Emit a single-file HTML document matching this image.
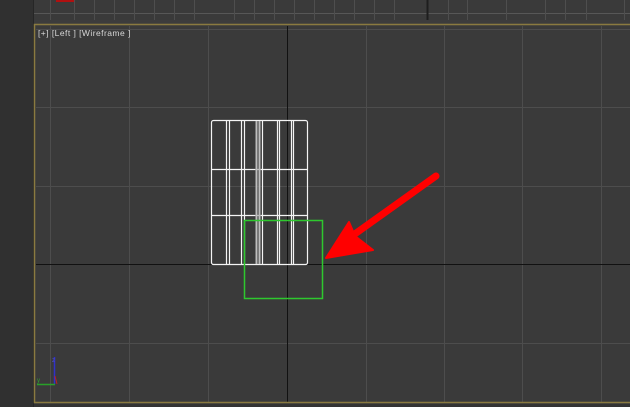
<!DOCTYPE html>
<html><head><style>
body{margin:0;width:630px;height:407px;overflow:hidden;background:#3a3a3a;font-family:"Liberation Sans",sans-serif}
</style></head><body>
<svg width="630" height="407" viewBox="0 0 630 407" xmlns="http://www.w3.org/2000/svg" style="position:absolute;left:0;top:0">
<rect width="630" height="407" fill="#3a3a3a"/>
<rect x="0" y="0" width="33" height="407" fill="#303030"/>
<line x1="33.5" y1="0" x2="33.5" y2="407" stroke="#262626"/>
<g stroke="#4e4e4e" stroke-width="1">
<line x1="34" y1="13.5" x2="630" y2="13.5" stroke="#575757"/>
<line x1="50.5" y1="0" x2="50.5" y2="20"/><line x1="74.5" y1="0" x2="74.5" y2="20"/>
<line x1="94.5" y1="0" x2="94.5" y2="20"/><line x1="114.5" y1="0" x2="114.5" y2="20"/>
<line x1="134.5" y1="0" x2="134.5" y2="20"/><line x1="154.5" y1="0" x2="154.5" y2="20"/>
<line x1="174.5" y1="0" x2="174.5" y2="20"/><line x1="194.5" y1="0" x2="194.5" y2="20"/>
<line x1="234.5" y1="0" x2="234.5" y2="20"/><line x1="254.5" y1="0" x2="254.5" y2="20"/>
<line x1="274.5" y1="0" x2="274.5" y2="20"/><line x1="294.5" y1="0" x2="294.5" y2="20"/>
<line x1="314.5" y1="0" x2="314.5" y2="20"/><line x1="334.5" y1="0" x2="334.5" y2="20"/>
<line x1="354.5" y1="0" x2="354.5" y2="20"/><line x1="374.5" y1="0" x2="374.5" y2="20"/>
<line x1="394.5" y1="0" x2="394.5" y2="20"/><line x1="448.5" y1="0" x2="448.5" y2="20"/>
<line x1="467.5" y1="0" x2="467.5" y2="20"/><line x1="506.5" y1="0" x2="506.5" y2="20"/>
<line x1="545.5" y1="0" x2="545.5" y2="20"/><line x1="565.5" y1="0" x2="565.5" y2="20"/>
<line x1="586.5" y1="0" x2="586.5" y2="20"/><line x1="624.5" y1="0" x2="624.5" y2="20"/>
</g>
<line x1="427.5" y1="0" x2="427.5" y2="20" stroke="#1e1e1e" stroke-width="2"/>
<rect x="56" y="0" width="18" height="2" fill="#b01010"/>
<rect x="34" y="20" width="596" height="4" fill="#3c3c3c"/>
<g stroke="#4d4d4d" stroke-width="1">
<line x1="50.5" y1="26" x2="50.5" y2="402"/><line x1="129.5" y1="26" x2="129.5" y2="402"/>
<line x1="208.5" y1="26" x2="208.5" y2="402"/><line x1="366.5" y1="26" x2="366.5" y2="402"/>
<line x1="444.5" y1="26" x2="444.5" y2="402"/><line x1="522.5" y1="26" x2="522.5" y2="402"/>
<line x1="601.5" y1="26" x2="601.5" y2="402"/>
<line x1="36" y1="29.5" x2="630" y2="29.5"/><line x1="36" y1="107.5" x2="630" y2="107.5"/>
<line x1="36" y1="186.5" x2="630" y2="186.5"/><line x1="36" y1="343.5" x2="630" y2="343.5"/>
</g>
<line x1="287.5" y1="26" x2="287.5" y2="402" stroke="#111"/>
<line x1="36" y1="264.5" x2="630" y2="264.5" stroke="#111"/>
<rect x="34.5" y="24.5" width="600" height="378" fill="none" stroke="#8a7a40" stroke-width="1.5"/>
<rect x="34" y="404" width="596" height="3" fill="#333"/>
<text x="38" y="36" font-size="8.5" letter-spacing="0.45" fill="#d8d8d8" font-family="Liberation Sans, sans-serif">[+] [Left ] [Wireframe ]</text>
<g stroke="#f4f4f4" stroke-width="1.2" fill="none">
<rect x="211.5" y="120.5" width="96" height="144" rx="2"/>
<line x1="211" y1="169.5" x2="307" y2="169.5"/><line x1="211" y1="215.5" x2="307" y2="215.5"/>
<line x1="226.5" y1="121" x2="226.5" y2="264"/><line x1="229.5" y1="121" x2="229.5" y2="264"/>
<line x1="241.5" y1="121" x2="241.5" y2="264"/><line x1="244.5" y1="121" x2="244.5" y2="264"/>
<line x1="256.5" y1="121" x2="256.5" y2="264"/><line x1="259.5" y1="121" x2="259.5" y2="264"/>
<line x1="262.5" y1="121" x2="262.5" y2="264"/>
<line x1="277.5" y1="121" x2="277.5" y2="264"/><line x1="279.5" y1="121" x2="279.5" y2="264"/>
<line x1="291.5" y1="121" x2="291.5" y2="264"/><line x1="293.5" y1="121" x2="293.5" y2="264"/>
</g>
<rect x="255" y="121" width="6" height="143" fill="#9a9a9a" opacity="0.6"/>
<rect x="244.5" y="220.5" width="78" height="78" fill="none" stroke="#2ec82e" stroke-width="1.5"/>
<line x1="436" y1="176" x2="352" y2="236" stroke="#f00" stroke-width="7" stroke-linecap="round"/>
<path d="M326 258 L349 222 L355 236 L373 250 Z" fill="#f00" stroke="#f00" stroke-width="2" stroke-linejoin="round"/>
<line x1="54.5" y1="357" x2="54.5" y2="384" stroke="#3030c8" stroke-width="1.5"/>
<line x1="37" y1="384.5" x2="55" y2="384.5" stroke="#28a028" stroke-width="1.5"/>
<line x1="55" y1="376" x2="57" y2="384" stroke="#c02020" stroke-width="1"/>
<text x="52" y="362" font-size="6" fill="#5050d0">z</text>
<text x="37" y="382" font-size="6" fill="#30a030">y</text>
</svg>
</body></html>
